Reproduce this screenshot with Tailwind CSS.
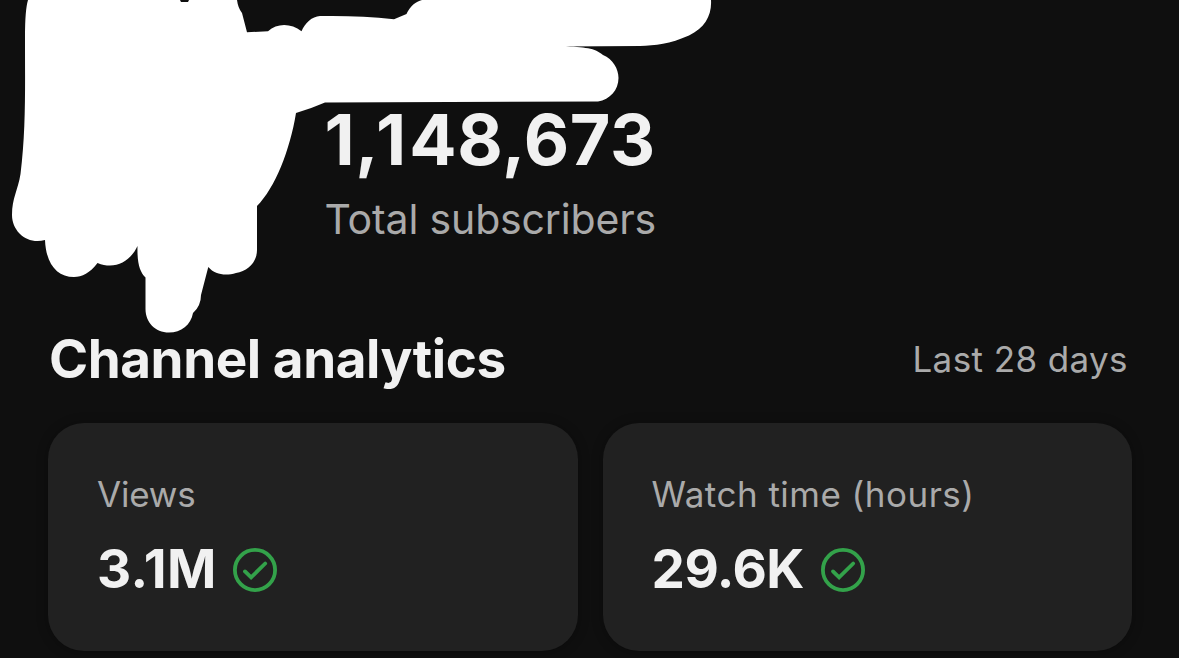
<!DOCTYPE html>
<html lang="en">
<head>
<meta charset="utf-8">
<title>Channel analytics</title>
<script src="https://cdn.jsdelivr.net/npm/@tailwindcss/browser@4"></script>
</head>
<body class="bg-[#0f0f0f]">
<main class="relative flex h-[658px] w-[1179px] flex-col overflow-hidden bg-[#0f0f0f] font-['Inter',sans-serif] text-[#f1f1f1]">
  <section class="h-[327px] pl-[324.5px] pt-[100px]">
    <div class="h-20 whitespace-nowrap text-[70px] font-bold leading-[80px] tracking-[0.6px]">1<span class="tracking-[-2.6px]">,</span><span class="tracking-[3px]">1</span>48,673</div>
    <div class="mt-3.5 whitespace-nowrap text-[41px] leading-[50px] tracking-[-0.15px] text-[#aaaaaa]">Total subscribers</div>
  </section>
  <header class="flex h-16 items-center justify-between pl-[49px] pr-[51px]">
    <h1 class="whitespace-nowrap text-[53px] font-bold leading-[64px] tracking-[-0.45px]">Channel analytics</h1>
    <span class="whitespace-nowrap text-[35px] leading-[44px] tracking-[0.4px] text-[#aaaaaa]">Last 28 days</span>
  </header>
  <section class="mt-8 grid h-[228px] grid-cols-2 gap-[25px] pl-[48px] pr-[47px]">
    <article class="rounded-[36px] bg-[#212121] pl-[49px] pt-[49px] shadow-[0_1px_12px_rgba(0,0,0,0.3)]">
      <div class="whitespace-nowrap text-[35px] leading-[44px] tracking-[-0.2px] text-[#aaaaaa]">Views</div>
      <div class="mt-[21px] flex h-16 items-center gap-4">
        <span class="whitespace-nowrap text-[53px] font-bold leading-[64px] tracking-[0.4px]">3.1M</span>
        <svg class="mt-0.5 size-11 shrink-0" viewBox="0 0 44 44" fill="none" stroke="#33a24a"><circle cx="22" cy="22" r="20.1" stroke-width="3.8"/><path d="M12 23.4 18.1 29.4 32.2 15.5" stroke-width="3.8" stroke-linecap="round"/></svg>
      </div>
    </article>
    <article class="rounded-[36px] bg-[#212121] pl-[49px] pt-[49px] shadow-[0_1px_12px_rgba(0,0,0,0.3)]">
      <div class="whitespace-nowrap text-[35px] leading-[44px] tracking-[0.48px] text-[#aaaaaa]">Watch time (hours)</div>
      <div class="mt-[21px] flex h-16 items-center gap-[17px]">
        <span class="whitespace-nowrap text-[53px] font-bold leading-[64px] tracking-[-0.5px]">29.6K</span>
        <svg class="mt-0.5 size-11 shrink-0" viewBox="0 0 44 44" fill="none" stroke="#33a24a"><circle cx="22" cy="22" r="20.1" stroke-width="3.8"/><path d="M12 23.4 18.1 29.4 32.2 15.5" stroke-width="3.8" stroke-linecap="round"/></svg>
      </div>
    </article>
  </section>
  <!-- Brush strokes covering the channel avatar and name -->
  <svg class="pointer-events-none absolute left-0 top-0" width="1179" height="340" viewBox="0 0 1179 340" fill="#fff">
    <path d="M28 0H180L181 2H188L189 0H237Q238 8 242 13L247 32.3 268 31.3C277 23 291 23 301.5 31.3C305 23 312 16.5 320 16C345 15.800 370 16 394 19.300L406.500 14C410 6 416 1.500 422 0H711C712 15 705 28 689 35.500C670 44 655 45.500 640 46L562 46.500C585 47 595 48 603 55C613 59 618.500 69 618.500 78C618.500 90 610 99.500 598 101.500L325 102.500Q310 109 296 113C290 150 275 188 257 206V250C257 262 248 271 236 273C226 276 215 275 208.300 267L201 295Q201 306 193 313C191 325 181 332.500 169 332.500C155 332.500 145.500 322 145.500 309V277.500C140 272 137 264 137.500 246C130 262 115 270 97.500 263C90 273 82 277 74 277C57 277 46 264 45 240C28 245 12 232 12 215C12 198 18 190 20.500 174C26 130 25 90 25 36Q25 10 28 0Z"/>
  </svg>
</main>
</body>
</html>
